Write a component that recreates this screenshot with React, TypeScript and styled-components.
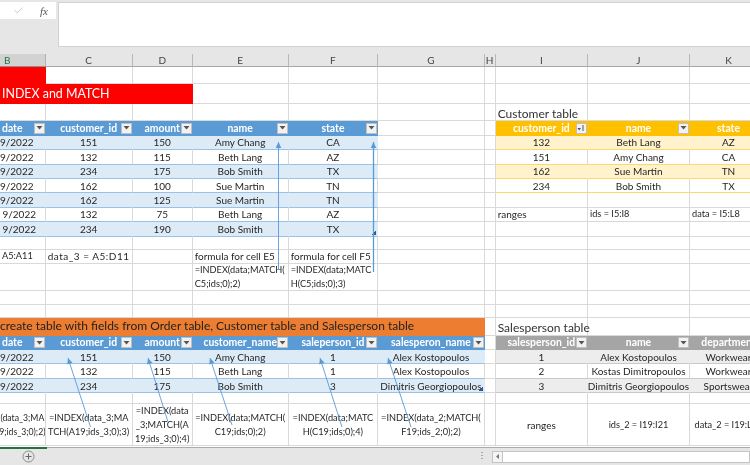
import React from "react";
import styled, { createGlobalStyle, css } from "styled-components";
import { Check } from "lucide-react";

const Global = createGlobalStyle`
  html, body { margin: 0; padding: 0; background: #fff; overflow: hidden; }
  #root { width: 750px; height: 465px; overflow: hidden; }
`;

const Window = styled.div`
  width: 750px;
  height: 465px;
  display: flex;
  flex-direction: column;
  overflow: hidden;
  font-family: Lato, "Liberation Sans", sans-serif;
  font-size: 10px;
  color: #262626;
  background: #e6e6e6;
  filter: blur(0.3px);
`;

const FormulaBar = styled.div`
  flex: none;
  height: 54px;
  box-sizing: border-box;
  display: flex;
  align-items: flex-start;
  gap: 2px;
  padding-top: 2px;
  background: #e6e6e6;
`;

const FormulaTools = styled.div`
  width: 56px;
  height: 17px;
  display: flex;
  align-items: center;
  justify-content: flex-end;
  gap: 16px;
  padding-right: 8px;
  box-sizing: border-box;
  background: #fff;
`;

const FxLabel = styled.span`
  font-family: "Liberation Serif", serif;
  font-style: italic;
  font-size: 11px;
  color: #555;
`;

const FormulaInput = styled.div`
  flex: 1;
  height: 45px;
  box-sizing: border-box;
  background: #fff;
  border: 1px solid #d2d2d2;
  border-right: none;
`;

const SheetViewport = styled.div`
  flex: none;
  position: relative;
  height: 393px;
  overflow: hidden;
  background: #fff;
`;

const Grid = styled.div`
  display: grid;
  grid-template-columns: 45.7px 87px 60px 96px 89.5px 106.5px 11px 92.3px 102px 78px;
  grid-template-rows:
    13px 17px 20px 17px 14.5px
    14.5px 14.5px 14.5px 14.4px 14.4px 14.4px 14.4px
    13.4px 14px 27px 14px 13px 18px 14px
    14.5px 14.5px 14.5px 11px 42px;
`;

type Tone =
  | "plain" | "col" | "colActive" | "red" | "orange"
  | "blueHead" | "blueBand" | "blueRow"
  | "amberHead" | "amberBand" | "amberRow"
  | "greyHead" | "greyBand" | "greyRow";

type Size = "base" | "formula" | "tight" | "range" | "wide" | "title";

const tones: Record<Tone, ReturnType<typeof css>> = {
  plain: css``,
  col: css`background: #e6e6e6; border-bottom-color: #a6a6a6; border-right-color: #b8b8b8; color: #444;`,
  colActive: css`background: #d2d2d2; border-bottom-color: #8f8f8f; border-right-color: #b0b0b0; color: #217346;`,
  red: css`background: #ff0000; border-color: #ff0000; color: #fff; font-size: 12.4px;`,
  orange: css`background: #ed7d31; border-color: #ed7d31; color: #222; font-size: 12px;`,
  blueHead: css`background: #5b9bd5; border-color: #5b9bd5; color: #fff; font-weight: 700; font-size: 10.4px;`,
  blueBand: css`background: #ddebf7; border-right-color: #ddebf7; border-bottom-color: #9bc2e6;`,
  blueRow: css`border-bottom-color: #9bc2e6;`,
  amberHead: css`background: #ffc000; border-color: #ffc000; color: #fff; font-weight: 700; font-size: 10.4px;`,
  amberBand: css`background: #fff2cc; border-right-color: #fff2cc; border-bottom-color: #ffd966;`,
  amberRow: css`border-bottom-color: #ffd966;`,
  greyHead: css`background: #a5a5a5; border-color: #a5a5a5; color: #fff; font-weight: 700; font-size: 10.4px;`,
  greyBand: css`background: #ededed; border-right-color: #ededed; border-bottom-color: #c9c9c9;`,
  greyRow: css`border-bottom-color: #c9c9c9;`,
};

const sizes: Record<Size, ReturnType<typeof css>> = {
  base: css``,
  formula: css`font-size: 9.2px;`,
  tight: css`font-size: 8.7px;`,
  range: css`font-size: 9.2px;`,
  wide: css`letter-spacing: 0.5px;`,
  title: css`font-size: 12px; color: #333; overflow: visible; padding-top: 3px;`,
};

const CellBox = styled.div<{ $tone: Tone; $span: number; $align: string; $pl: number; $size: Size }>`
  position: relative;
  box-sizing: border-box;
  min-width: 0;
  display: flex;
  align-items: center;
  justify-content: ${(p) => p.$align};
  grid-column: span ${(p) => p.$span};
  padding-left: ${(p) => p.$pl}px;
  border-right: 1px solid #d9d9d9;
  border-bottom: 1px solid #d9d9d9;
  white-space: nowrap;
  overflow: hidden;
  line-height: 14px;
  ${(p) => tones[p.$tone]}
  ${(p) => sizes[p.$size]}
`;

const CellText = styled.span<{ $center: boolean }>`
  text-align: ${(p) => (p.$center ? "center" : "left")};
`;

const FilterButton = styled.span`
  position: absolute;
  right: 0;
  top: 1.5px;
  width: 11px;
  height: 11px;
  box-sizing: border-box;
  display: flex;
  align-items: center;
  justify-content: center;
  background: #f2f2f2;
  border: 1px solid #bfbfbf;
`;

const SortIcon = () => (
  <svg width="8" height="8" viewBox="0 0 8 8">
    <path d="M0.5 4 L4 4 L2.2 6.5 Z" fill="#555" />
    <path d="M6 1 V7" stroke="#555" strokeWidth="1" />
  </svg>
);

const DownIcon = () => (
  <svg width="7" height="4" viewBox="0 0 7 4">
    <path d="M0.5 0 H6.5 L3.5 3.5 Z" fill="#555" />
  </svg>
);

const ResizeHandle = styled.span`
  position: absolute;
  right: 1px;
  bottom: 1px;
  width: 4px;
  height: 4px;
  background: linear-gradient(135deg, transparent 50%, #2f5597 50%);
`;

const ArrowLayer = styled.svg`
  position: absolute;
  left: 0;
  top: 0;
  pointer-events: none;
`;

const Footer = styled.div`
  flex: none;
  height: 18px;
  box-sizing: border-box;
  display: flex;
  align-items: center;
  border-top: 1px solid #ababab;
  background: #e6e6e6;
`;

const ActiveTab = styled.div`
  align-self: flex-start;
  width: 47px;
  height: 1px;
  margin-top: -1px;
  border-top: 2px solid #217346;
`;

const AddSheet = styled.svg`
  margin-left: -25px;
`;

const FooterGap = styled.div`
  flex: 1;
`;

const Grip = styled.div`
  width: 2px;
  height: 9px;
  margin-right: 9px;
  background: repeating-linear-gradient(#a8a8a8 0 1px, transparent 1px 3px);
`;

const ScrollArrow = styled.div`
  width: 11px;
  height: 12px;
  box-sizing: border-box;
  display: flex;
  align-items: center;
  justify-content: center;
  background: #f4f4f4;
  border: 1px solid #c4c4c4;
`;

const ScrollTrack = styled.div`
  width: 247px;
  height: 12px;
  box-sizing: border-box;
  background: #fff;
  border: 1px solid #c4c4c4;
  border-left: none;
`;

type CellDef = {
  t?: React.ReactNode;
  tone?: Tone;
  span?: number;
  left?: boolean;
  pl?: number;
  filter?: "down" | "sort";
  handle?: boolean;
  size?: Size;
};

const T = (t?: React.ReactNode, tone: Tone = "plain", extra: Partial<CellDef> = {}): CellDef => ({ t, tone, ...extra });
const L = (t: React.ReactNode, extra: Partial<CellDef> = {}): CellDef => ({ t, left: true, pl: 2, ...extra });
const E: CellDef = {};
const lines = (...parts: string[]) =>
  parts.map((p, i) => (
    <React.Fragment key={i}>
      {i > 0 && <br />}
      {p}
    </React.Fragment>
  ));

const head = (t: string, tone: Tone, filter: "down" | "sort" = "down") => T(t, tone, { filter });
const dateHead = () => T("date", "blueHead", { filter: "down", left: true, pl: 2 });
const F = (...parts: string[]) => T(lines(...parts), "plain", { size: "formula" });

const order: [string, string, string, string, string][] = [
  ["9/2022", "151", "150", "Amy Chang", "CA"],
  ["9/2022", "132", "115", "Beth Lang", "AZ"],
  ["9/2022", "234", "175", "Bob Smith", "TX"],
  ["9/2022", "162", "100", "Sue Martin", "TN"],
  ["9/2022", "162", "125", "Sue Martin", "TN"],
  ["9/2022", "132", "75", "Beth Lang", "AZ"],
  ["9/2022", "234", "190", "Bob Smith", "TX"],
];

const customers: [string, string, string][] = [
  ["132", "Beth Lang", "AZ"],
  ["151", "Amy Chang", "CA"],
  ["162", "Sue Martin", "TN"],
  ["234", "Bob Smith", "TX"],
];

const joined: string[][] = [
  ["151", "150", "Amy Chang", "1", "Alex Kostopoulos"],
  ["132", "115", "Beth Lang", "1", "Alex Kostopoulos"],
  ["234", "175", "Bob Smith", "3", "Dimitris Georgiopoulos"],
];

const sales: string[][] = [
  ["1", "Alex Kostopoulos", "Workwear"],
  ["2", "Kostas Dimitropoulos", "Workwear"],
  ["3", "Dimitris Georgiopoulos", "Sportswear"],
];

const orderRows: CellDef[][] = order.map((r, i) => {
  const tone: Tone = i % 2 === 0 ? "blueBand" : "blueRow";
  const amber: Tone = i % 2 === 0 ? "amberBand" : "amberRow";
  const c = customers[i];
  const right: CellDef[] = c
    ? c.map((t) => T(t, amber))
    : i === 5
    ? [L("ranges"), L("ids = I5:I8", { size: "range" }), L("data = I5:L8", { size: "range" })]
    : [E, E, E];
  return [
    T(r[0], tone, { left: true, pl: i > 4 ? 2.5 : 0 }),
    ...r.slice(1).map((t, j) => T(t, tone, j === 3 && i === 6 ? { handle: true } : {})),
    E,
    E,
    ...right,
  ];
});

const joinedRows: CellDef[][] = joined.map((r, i) => {
  const tone: Tone = i % 2 === 0 ? "blueBand" : "blueRow";
  const g: Tone = i % 2 === 0 ? "greyBand" : "greyRow";
  return [
    T("9/2022", tone, { left: true }),
    ...r.map((t, j) => T(t, tone, j === 4 && i === 2 ? { handle: true } : {})),
    E,
    ...sales[i].map((t) => T(t, g)),
  ];
});

const rows: CellDef[][] = [
  [
    T("B", "colActive", { left: true, pl: 4 }),
    T("C", "col"), T("D", "col"), T("E", "col"), T("F", "col"), T("G", "col"), T("H", "col"), T("I", "col"), T("J", "col"), T("K", "col"),
  ],
  [T("", "red"), E, E, E, E, E, E, E, E, E],
  [T("INDEX and MATCH", "red", { span: 3, left: true, pl: 2 }), E, E, E, E, E, E, E],
  [E, E, E, E, E, E, E, L("Customer table", { size: "title" }), E, E],
  [
    dateHead(), head("customer_id", "blueHead"), head("amount", "blueHead"), head("name", "blueHead"), head("state", "blueHead"),
    E, E,
    head("customer_id", "amberHead", "sort"), head("name", "amberHead"), head("state", "amberHead"),
  ],
  ...orderRows,
  [E, E, E, E, E, E, E, E, E, E],
  [
    L("A5:A11", { size: "range" }), L("data_3 = A5:D11", { size: "wide" }), E, L("formula for cell E5"), L("formula for cell F5"),
    E, E, E, E, E,
  ],
  [
    E, E, E,
    L(lines("=INDEX(data;MATCH(", "C5;ids;0);2)"), { size: "formula" }),
    L(lines("=INDEX(data;MATC", "H(C5;ids;0);3)"), { size: "formula" }),
    E, E, E, E, E,
  ],
  [E, E, E, E, E, E, E, E, E, E],
  [E, E, E, E, E, E, E, E, E, E],
  [
    T("create table with fields from Order table, Customer table and Salesperson table", "orange", { span: 6, left: true, pl: 0 }),
    E,
    L("Salesperson table", { size: "title" }), E, E,
  ],
  [
    dateHead(), head("customer_id", "blueHead"), head("amount", "blueHead"), head("customer_name", "blueHead"), head("saleperson_id", "blueHead"), head("salesperon_name", "blueHead"),
    E,
    head("salesperson_id", "greyHead"), head("name", "greyHead"), head("department", "greyHead"),
  ],
  ...joinedRows,
  [E, E, E, E, E, E, E, E, E, E],
  [
    T(lines("(data_3;MA", "9;ids_3;0);2)"), "plain", { size: "tight" }),
    F("=INDEX(data_3;MA", "TCH(A19;ids_3;0);3)"),
    F("=INDEX(data", "_3;MATCH(A", "19;ids_3;0);4)"),
    F("=INDEX(data;MATCH(", "C19;ids;0);2)"),
    F("=INDEX(data;MATC", "H(C19;ids;0);4)"),
    F("=INDEX(data_2;MATCH(", "F19;ids_2;0);2)"),
    E,
    T("ranges"),
    T("ids_2 = I19:I21", "plain", { size: "range" }),
    T("data_2 = I19:L21", "plain", { size: "range" }),
  ],
];

const arrows = [
  [278.5, 216, 278.5, 88, 0.9],
  [373.5, 218, 373.5, 88, 1.3],
  [90.5, 373, 68, 304, 0.9],
  [168, 368, 148, 304, 0.9],
  [232, 371, 210, 304, 0.9],
  [342, 373, 320, 304, 0.9],
  [411, 373, 388, 304, 0.9],
];

export default function App() {
  return (
    <Window>
      <Global />
      <FormulaBar>
        <FormulaTools>
          <Check size={11} color="#c4c4c4" strokeWidth={2} />
          <FxLabel>fx</FxLabel>
        </FormulaTools>
        <FormulaInput />
      </FormulaBar>
      <SheetViewport>
        <Grid>
          {rows.flatMap((row, r) =>
            row.map((c, i) => (
              <CellBox
                key={`${r}-${i}`}
                $tone={c.tone ?? "plain"}
                $span={c.span ?? 1}
                $align={c.left ? "flex-start" : "center"}
                $pl={c.pl ?? 0}
                $size={c.size ?? "base"}
              >
                <CellText $center={!c.left}>{c.t}</CellText>
                {c.filter && (
                  <FilterButton>{c.filter === "sort" ? <SortIcon /> : <DownIcon />}</FilterButton>
                )}
                {c.handle && <ResizeHandle />}
              </CellBox>
            ))
          )}
        </Grid>
        <ArrowLayer width="750" height="393" viewBox="0 0 750 393">
          {arrows.map(([x1, y1, x2, y2, w], i) => {
            const a = Math.atan2(y2 - y1, x2 - x1);
            const b = (x: number, y: number) =>
              `${x2 + x * Math.cos(a) - y * Math.sin(a)},${y2 + x * Math.sin(a) + y * Math.cos(a)}`;
            return (
              <g key={i}>
                <line x1={x1} y1={y1} x2={x2} y2={y2} stroke="#5b9bd5" strokeWidth={w} />
                <polygon points={`${b(0, 0)} ${b(-6, -2.8)} ${b(-6, 2.8)}`} fill="#5b9bd5" />
              </g>
            );
          })}
        </ArrowLayer>
      </SheetViewport>
      <Footer>
        <ActiveTab />
        <AddSheet width="13" height="13" viewBox="0 0 13 13">
          <circle cx="6.5" cy="6.5" r="5.5" fill="none" stroke="#8a8a8a" strokeWidth="1" />
          <path d="M6.5 3.5 V9.5 M3.5 6.5 H9.5" stroke="#666" strokeWidth="1" />
        </AddSheet>
        <FooterGap />
        <Grip />
        <ScrollArrow>
          <svg width="3" height="5" viewBox="0 0 3 5"><path d="M3 0 V5 L0 2.5 Z" fill="#777" /></svg>
        </ScrollArrow>
        <ScrollTrack />
      </Footer>
    </Window>
  );
}
